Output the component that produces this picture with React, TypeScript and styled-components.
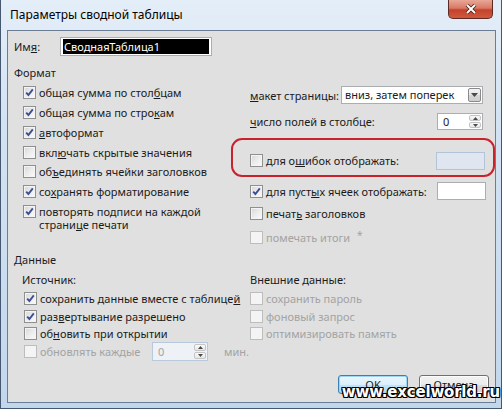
import React from 'react';
import styled, { createGlobalStyle } from 'styled-components';

const GlobalStyle = createGlobalStyle`
  html, body {
    margin: 0;
    padding: 0;
    background: #c9dbee;
  }
  body {
    font-family: 'Noto Sans', 'Segoe UI', sans-serif;
    font-size: 11px;
    color: #1b1b1b;
  }
`;

const Window = styled.div`
  position: relative;
  width: 502px;
  height: 409px;
  box-sizing: border-box;
  display: flex;
  flex-direction: column;
  padding: 0 5px 5px 6px;
  border: 1px solid #45586f;
  border-top: none;
  background: linear-gradient(180deg, #e4eef8 0%, #d3e3f3 30%, #c3d7ec 100%);
  overflow: hidden;
`;

const TitleBar = styled.div`
  height: 30px;
  flex-shrink: 0;
  display: flex;
  justify-content: space-between;
  padding-left: 3px;
`;

const Title = styled.div`
  line-height: 30px;
  font-size: 12px;
  color: #000;
`;

const CloseButton = styled.div`
  width: 45px;
  height: 19px;
  margin-right: 3px;
  box-sizing: border-box;
  border: 1px solid #5e2a24;
  border-top: none;
  border-radius: 0 0 5px 5px;
  background: linear-gradient(180deg, #e9a796 0%, #d87a66 45%, #c4422c 55%, #d1583f 100%);
  display: flex;
  align-items: center;
  justify-content: center;
`;

const Client = styled.div`
  flex: 1;
  display: flex;
  flex-direction: column;
  border: 1px solid #6a7d94;
  background: #e0e0e0;
  padding: 6px 9px 8px 6px;
`;

const NameRow = styled.div`
  display: flex;
  align-items: center;
  height: 19px;
`;

const NameLabel = styled.span`
  width: 46px;
`;

const NameInput = styled.div`
  width: 152px;
  height: 19px;
  box-sizing: border-box;
  border: 1px solid #abadb3;
  background: #fff;
  padding: 1px 2px;
  display: flex;
`;

const Selection = styled.span`
  flex: 1;
  background: #000;
  color: #fff;
  line-height: 15px;
  padding-left: 1px;
`;

const SectionTitle = styled.div<{ top: number }>`
  margin-top: ${p => p.top}px;
  height: 16px;
  line-height: 16px;
`;

const Columns = styled.div<{ top: number }>`
  display: grid;
  grid-template-columns: 236px 1fr;
  margin-top: ${p => p.top}px;
`;

const Col = styled.div<{ indent?: number }>`
  display: flex;
  flex-direction: column;
  padding-left: ${p => p.indent || 0}px;
`;

const CheckRow = styled.div<{ h: number; top?: number; disabled?: boolean }>`
  display: flex;
  align-items: center;
  height: ${p => p.h}px;
  margin-top: ${p => p.top || 0}px;
  gap: 3px;
  color: ${p => (p.disabled ? '#a3a3a3' : 'inherit')};
  white-space: nowrap;
`;

const Text = styled.span<{ w?: number; muted?: boolean }>`
  ${p => (p.w ? `width: ${p.w}px;` : '')}
  ${p => (p.muted ? 'color: #a3a3a3;' : '')}
`;

const MultiRow = styled.div`
  display: flex;
  align-items: flex-start;
  gap: 3px;
  padding-top: 3.5px;
`;

const MultiText = styled.span`
  line-height: 13px;
`;

const Box = styled.span<{ disabled?: boolean }>`
  flex-shrink: 0;
  width: 13px;
  height: 13px;
  box-sizing: border-box;
  border: 1px solid ${p => (p.disabled ? '#bdbdbd' : '#8e8f8f')};
  background: ${p =>
    p.disabled
      ? '#f4f4f4'
      : 'linear-gradient(135deg, #d6d6d6 0%, #ececec 50%, #fbfbfb 100%)'};
  box-shadow: inset 0 0 0 1px #f4f4f4;
  display: flex;
  align-items: center;
  justify-content: center;
`;

const FieldRow = styled.div<{ h: number; top: number }>`
  display: flex;
  align-items: center;
  justify-content: space-between;
  height: ${p => p.h}px;
  margin-top: ${p => p.top}px;
  white-space: nowrap;
`;

const Select = styled.div`
  width: 142px;
  height: 18px;
  margin-right: 3px;
  box-sizing: border-box;
  border: 1px solid #abadb3;
  background: #fff;
  display: flex;
  align-items: stretch;
`;

const SelectText = styled.span`
  flex: 1;
  padding-left: 3px;
  line-height: 16px;
`;

const DropButton = styled.span`
  width: 13px;
  margin: 1px;
  box-sizing: border-box;
  border: 1px solid #8a8a8a;
  border-radius: 2px;
  background: linear-gradient(180deg, #f3f3f3 0%, #e6e6e6 50%, #d6d6d6 51%, #cfcfcf 100%);
  display: flex;
  align-items: center;
  justify-content: center;
`;

const Spin = styled.div<{ w: number; h: number; disabled?: boolean }>`
  width: ${p => p.w}px;
  height: ${p => p.h}px;
  box-sizing: border-box;
  border: 1px solid ${p => (p.disabled ? '#b9c9dc' : '#abadb3')};
  background: ${p => (p.disabled ? '#eef1f5' : '#fff')};
  color: ${p => (p.disabled ? '#a3a3a3' : 'inherit')};
  display: flex;
  align-items: stretch;
`;

const SpinValue = styled.span`
  flex: 1;
  padding-left: 5px;
  display: flex;
  align-items: center;
`;

const SpinButtons = styled.span`
  width: 12px;
  display: flex;
  flex-direction: column;
  gap: 1px;
  padding: 1px;
`;

const SpinPart = styled.span`
  flex: 1;
  border: 1px solid #c4c4c4;
  border-radius: 2px;
  background: linear-gradient(180deg, #fafafa, #e7e7e7);
  display: flex;
  align-items: center;
  justify-content: center;
`;

const TextBox = styled.div<{ disabled?: boolean }>`
  width: 49px;
  height: 18px;
  box-sizing: border-box;
  border: 1px solid ${p => (p.disabled ? '#b3c3d8' : '#abadb3')};
  background: ${p => (p.disabled ? '#dfe6ef' : '#fff')};
`;

const Highlight = styled.div`
  margin: 8px -9px 0 -19px;
  border: 2px solid #c8232c;
  border-radius: 11px;
  padding: 11px 8px 5px 17px;
`;

const Star = styled.span`
  margin-left: 7px;
  font-size: 10px;
  position: relative;
  top: -3px;
`;

const SubTitle = styled.div<{ indent?: number }>`
  height: 16px;
  line-height: 16px;
  margin-top: 4px;
  margin-bottom: 2px;
  padding-left: ${p => p.indent || 0}px;
`;

const Unit = styled.span`
  margin-left: 13px;
  color: #a3a3a3;
`;

const ButtonRow = styled.div`
  margin-top: auto;
  margin-right: -3px;
  display: flex;
  justify-content: flex-end;
  gap: 11px;
`;

const DialogButton = styled.div<{ primary?: boolean }>`
  width: 70px;
  height: 19px;
  box-sizing: border-box;
  border: 1px solid ${p => (p.primary ? '#3c7fb1' : '#707070')};
  border-radius: 3px;
  background: ${p =>
    p.primary
      ? 'linear-gradient(180deg, #eaf6fd 0%, #d9f0fc 50%, #bee6fd 51%, #a7d9f5 100%)'
      : 'linear-gradient(180deg, #f2f2f2 0%, #ebebeb 50%, #dddddd 51%, #cfcfcf 100%)'};
  box-shadow: ${p => (p.primary ? 'inset 0 0 0 1px #9fd4f2' : 'inset 0 0 0 1px #fcfcfc')};
  display: flex;
  align-items: center;
  justify-content: center;
  line-height: 17px;
`;

const Watermark = styled.div`
  position: absolute;
  right: 1px;
  bottom: 7px;
  font-family: 'DejaVu Sans', sans-serif;
  font-weight: bold;
  font-size: 15px;
  color: #fff;
  letter-spacing: -0.2px;
  text-shadow: 1px 0 0 #000, -1px 0 0 #000, 0 1px 0 #000, 0 -1px 0 #000,
    1px 1px 0 #000, -1px -1px 0 #000, 1px -1px 0 #000, -1px 1px 0 #000;
`;

function Check({ checked, disabled }: { checked?: boolean; disabled?: boolean }) {
  return (
    <Box disabled={disabled}>
      {checked && (
        <svg width="9" height="9" viewBox="0 0 9 9">
          <path d="M1.2 4.6 L3.4 7 L7.8 1.4" fill="none" stroke="#3d4f94" strokeWidth="1.9" />
        </svg>
      )}
    </Box>
  );
}

function Arrow({ up, size = 3 }: { up?: boolean; size?: number }) {
  const w = size * 2 + 1;
  return (
    <svg width={w} height={size + 1} viewBox={`0 0 ${w} ${size + 1}`}>
      <path
        d={up ? `M0 ${size + 1} L${w / 2} 0 L${w} ${size + 1} Z` : `M0 0 L${w / 2} ${size + 1} L${w} 0 Z`}
        fill="#4a4a4a"
      />
    </svg>
  );
}

function SpinBox({ w, h, disabled }: { w: number; h: number; disabled?: boolean }) {
  return (
    <Spin w={w} h={h} disabled={disabled}>
      <SpinValue>0</SpinValue>
      <SpinButtons>
        <SpinPart><Arrow up size={2} /></SpinPart>
        <SpinPart><Arrow size={2} /></SpinPart>
      </SpinButtons>
    </Spin>
  );
}

export default function App() {
  return (
    <>
      <GlobalStyle />
      <Window>
        <TitleBar>
          <Title>Параметры сводной таблицы</Title>
          <CloseButton>
            <svg width="12" height="10" viewBox="0 0 12 10">
              <path d="M2 1 L10 9 M10 1 L2 9" stroke="#4a1d17" strokeWidth="3.6" />
              <path d="M2 1 L10 9 M10 1 L2 9" stroke="#fff" strokeWidth="2" />
            </svg>
          </CloseButton>
        </TitleBar>
        <Client>
          <NameRow>
            <NameLabel>Им<u>я</u>:</NameLabel>
            <NameInput>
              <Selection>СводнаяТаблица1</Selection>
            </NameInput>
          </NameRow>

          <SectionTitle top={9}>Формат</SectionTitle>
          <Columns top={2}>
            <Col indent={9}>
              <CheckRow h={19.75}><Check checked /><Text>общая сумма по стол<u>б</u>цам</Text></CheckRow>
              <CheckRow h={19.75}><Check checked /><Text>общая сумма по стро<u>к</u>ам</Text></CheckRow>
              <CheckRow h={19.75}><Check checked /><Text><u>а</u>втоформат</Text></CheckRow>
              <CheckRow h={19.75}><Check /><Text>вкл<u>ю</u>чать скрытые значения</Text></CheckRow>
              <CheckRow h={19.75}><Check /><Text>об<u>ъ</u>единять ячейки заголовков</Text></CheckRow>
              <CheckRow h={19.75}><Check checked /><Text>со<u>х</u>ранять форматирование</Text></CheckRow>
              <MultiRow>
                <Check checked />
                <MultiText>повторять подписи на каждой<br />страни<u>ц</u>е печати</MultiText>
              </MultiRow>
            </Col>
            <Col>
              <FieldRow h={18} top={3}>
                <Text><u>м</u>акет страницы:</Text>
                <Select>
                  <SelectText>вниз, затем поперек</SelectText>
                  <DropButton><Arrow size={3} /></DropButton>
                </Select>
              </FieldRow>
              <FieldRow h={17} top={9}>
                <Text><u>ч</u>исло полей в столбце:</Text>
                <span style={{ marginRight: 3 }}><SpinBox w={46} h={17} /></span>
              </FieldRow>
              <Highlight>
                <FieldRow h={19} top={0}>
                  <CheckRow h={19}><Check /><Text>для о<u>ш</u>ибок отображать:</Text></CheckRow>
                  <TextBox disabled />
                </FieldRow>
              </Highlight>
              <FieldRow h={18} top={5}>
                <CheckRow h={18}><Check checked /><Text>для пуст<u>ы</u>х ячеек отображать:</Text></CheckRow>
                <TextBox />
              </FieldRow>
              <CheckRow h={19} top={4}><Check /><Text>печат<u>ь</u> заголовков</Text></CheckRow>
              <CheckRow h={19} top={5} disabled><Check disabled /><Text>помечать итоги<Star>*</Star></Text></CheckRow>
            </Col>
          </Columns>

          <SectionTitle top={5}>Данные</SectionTitle>
          <Columns top={0}>
            <Col>
              <SubTitle indent={8}>Источник:</SubTitle>
              <Col indent={10}>
                <CheckRow h={17.5}><Check checked /><Text>сохранить данные вместе с таблице<u>й</u></Text></CheckRow>
                <CheckRow h={17.5}><Check checked /><Text>раз<u>в</u>ертывание разрешено</Text></CheckRow>
                <CheckRow h={17.5}><Check /><Text>об<u>н</u>овить при открытии</Text></CheckRow>
                <CheckRow h={17.5}>
                  <Check disabled />
                  <Text w={109} muted>обновлять каждые</Text>
                  <SpinBox w={56} h={19} disabled />
                  <Unit>мин.</Unit>
                </CheckRow>
              </Col>
            </Col>
            <Col>
              <SubTitle>Внешние данные:</SubTitle>
              <CheckRow h={17.5} disabled><Check disabled /><Text>сохранить пароль</Text></CheckRow>
              <CheckRow h={17.5} disabled><Check disabled /><Text>фоновый запрос</Text></CheckRow>
              <CheckRow h={17.5} disabled><Check disabled /><Text>оптимизировать память</Text></CheckRow>
            </Col>
          </Columns>

          <ButtonRow>
            <DialogButton primary>OK</DialogButton>
            <DialogButton>Отмена</DialogButton>
          </ButtonRow>
        </Client>
        <Watermark>www.excelworld.ru</Watermark>
      </Window>
    </>
  );
}
